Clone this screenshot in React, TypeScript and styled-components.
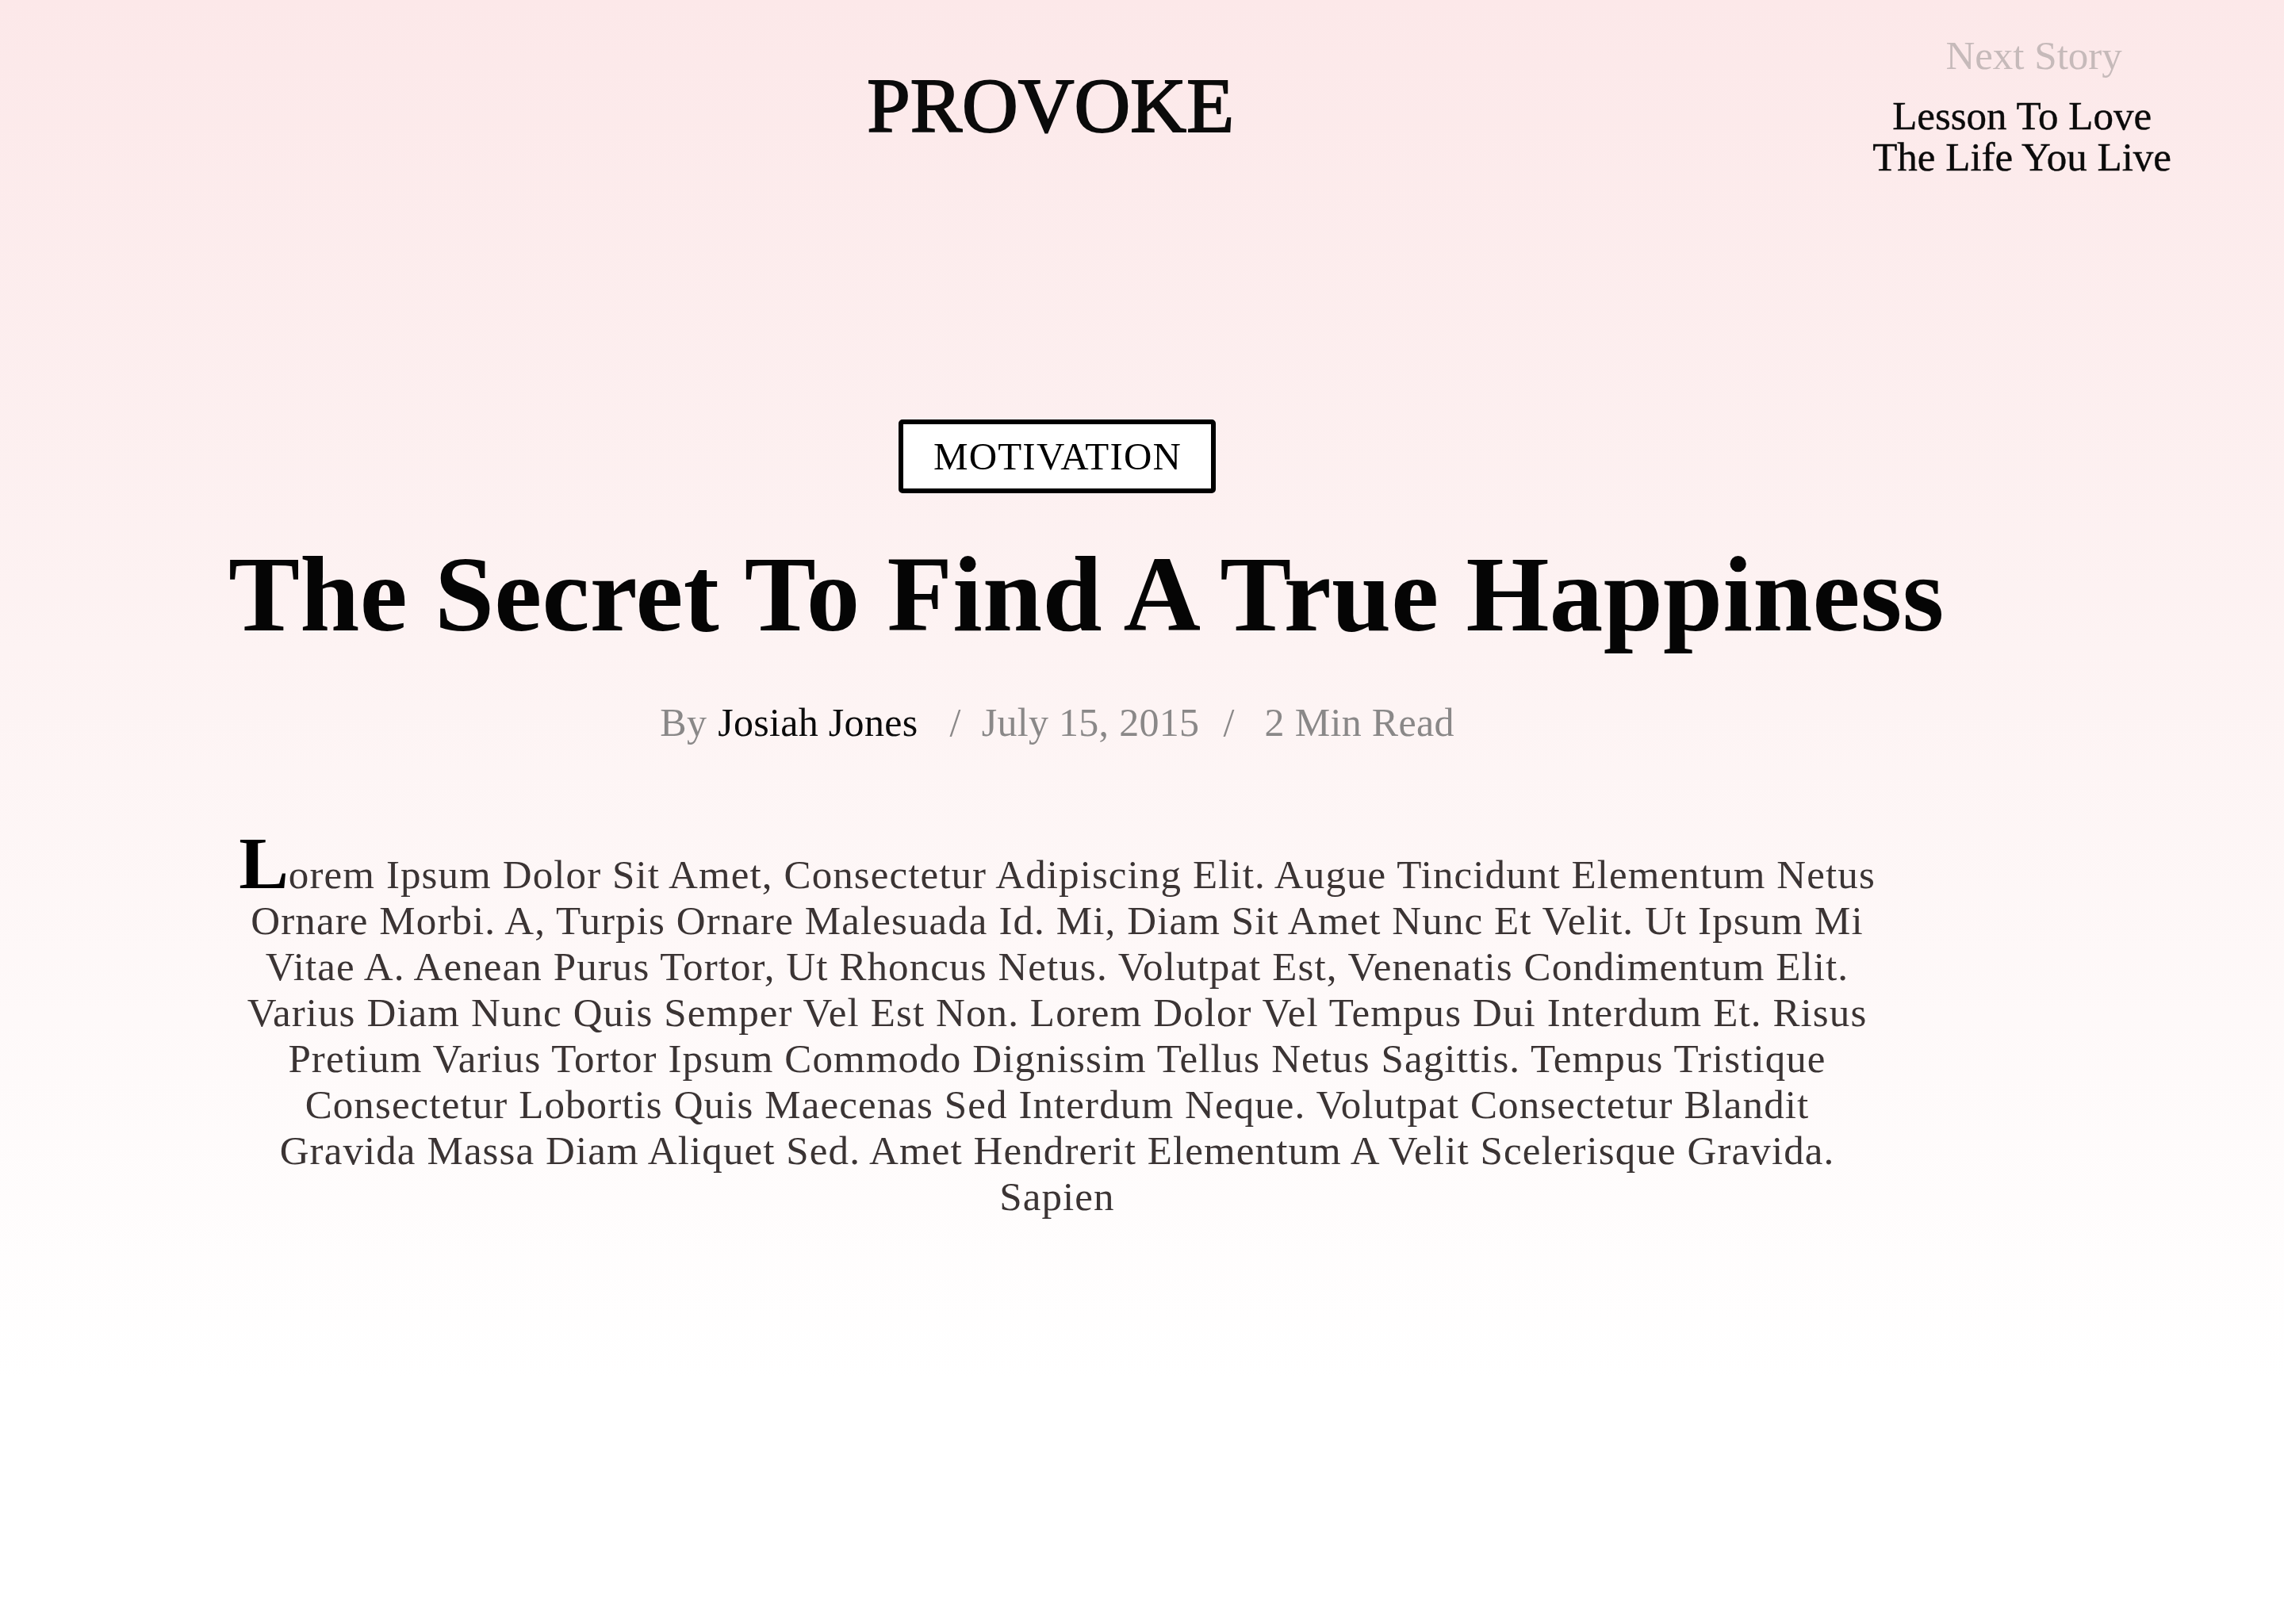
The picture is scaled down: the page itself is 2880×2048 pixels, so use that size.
import React from "react";
import styled, { createGlobalStyle } from "styled-components";

const GlobalStyle = createGlobalStyle`
  html, body {
    margin: 0;
    padding: 0;
  }
  body {
    min-height: 2048px;
    background: linear-gradient(to bottom, #fce8e9 0%, #fdf3f3 40%, #ffffff 85%);
    font-family: "Liberation Serif", "Times New Roman", serif;
    color: #111;
  }
`;

const Page = styled.div`
  min-height: 2048px;
  display: flex;
  flex-direction: column;
`;

const Header = styled.header`
  display: flex;
  align-items: flex-start;
  padding: 44px 142px 0 288px;
`;

const Logo = styled.div`
  flex: 1;
  margin-top: 40px;
  text-align: center;
  font-size: 98px;
  line-height: 98px;
  color: #0b0b0b;
  -webkit-text-stroke: 2px #0b0b0b;
`;

const NextStory = styled.a`
  display: flex;
  flex-direction: column;
  align-items: center;
  text-decoration: none;
  color: #0b0b0b;
`;

const NextLabel = styled.span`
  font-size: 51px;
  line-height: 52px;
  color: #c6baba;
  padding-left: 30px;
  margin-bottom: 24px;
`;

const NextTitle = styled.span`
  font-size: 51px;
  line-height: 52px;
  text-align: center;
  -webkit-text-stroke: 0.4px #0b0b0b;
`;

const Main = styled.main`
  width: 2090px;
  margin: 305px 0 0 288px;
  display: flex;
  flex-direction: column;
  align-items: center;
`;

const Badge = styled.div`
  border: 6px solid #000;
  border-radius: 5px;
  background: #fff;
  padding: 0 37px 0 38px;
  font-size: 49px;
  letter-spacing: 1.2px;
  line-height: 81px;
  color: #000;
  text-transform: uppercase;
`;

const Title = styled.h1`
  align-self: stretch;
  margin: 49px 0 0;
  text-align: center;
  white-space: nowrap;
  font-size: 135px;
  letter-spacing: 0.3px;
  line-height: 158px;
  font-weight: 700;
  color: #050505;
`;

const Meta = styled.div`
  margin-top: 52px;
  display: flex;
  align-items: baseline;
  font-size: 50px;
  letter-spacing: 0.3px;
  line-height: 60px;
  color: #8a8888;
`;

const Author = styled.span`
  color: #0b0b0b;
  margin-left: 14px;
`;

const Sep = styled.span<{ $l: number; $r: number }>`
  margin: 0 ${(p) => p.$r}px 0 ${(p) => p.$l}px;
`;

const Body = styled.p`
  align-self: stretch;
  margin: 118px -60px 0;
  text-align: center;
  font-size: 51px;
  letter-spacing: 1.1px;
  line-height: 58px;
  color: #3b3434;

  &::first-letter {
    font-size: 94px;
    letter-spacing: 0;
    font-weight: 700;
    color: #000;
  }
`;

const lines = [
  "Lorem Ipsum Dolor Sit Amet, Consectetur Adipiscing Elit. Augue Tincidunt Elementum Netus",
  "Ornare Morbi. A, Turpis Ornare Malesuada Id. Mi, Diam Sit Amet Nunc Et Velit. Ut Ipsum Mi",
  "Vitae A. Aenean Purus Tortor, Ut Rhoncus Netus. Volutpat Est, Venenatis Condimentum Elit.",
  "Varius Diam Nunc Quis Semper Vel Est Non. Lorem Dolor Vel Tempus Dui Interdum Et. Risus",
  "Pretium Varius Tortor Ipsum Commodo Dignissim Tellus Netus Sagittis. Tempus Tristique",
  "Consectetur Lobortis Quis Maecenas Sed Interdum Neque. Volutpat Consectetur Blandit",
  "Gravida Massa Diam Aliquet Sed. Amet Hendrerit Elementum A Velit Scelerisque Gravida.",
  "Sapien",
];

export default function App() {
  return (
    <>
      <GlobalStyle />
      <Page>
        <Header>
          <Logo>PROVOKE</Logo>
          <NextStory href="#">
            <NextLabel>Next Story</NextLabel>
            <NextTitle>
              Lesson To Love
              <br />
              The Life You Live
            </NextTitle>
          </NextStory>
        </Header>
        <Main>
          <Badge>Motivation</Badge>
          <Title>The Secret To Find A True Happiness</Title>
          <Meta>
            <span>
              By<Author>Josiah Jones</Author>
            </span>
            <Sep $l={40} $r={26}>/</Sep>
            <span>July 15, 2015</span>
            <Sep $l={30} $r={38}>/</Sep>
            <span>2 Min Read</span>
          </Meta>
          <Body>
            {lines.map((line, i) => (
              <React.Fragment key={i}>
                {line}
                {i < lines.length - 1 && <br />}
              </React.Fragment>
            ))}
          </Body>
        </Main>
      </Page>
    </>
  );
}
